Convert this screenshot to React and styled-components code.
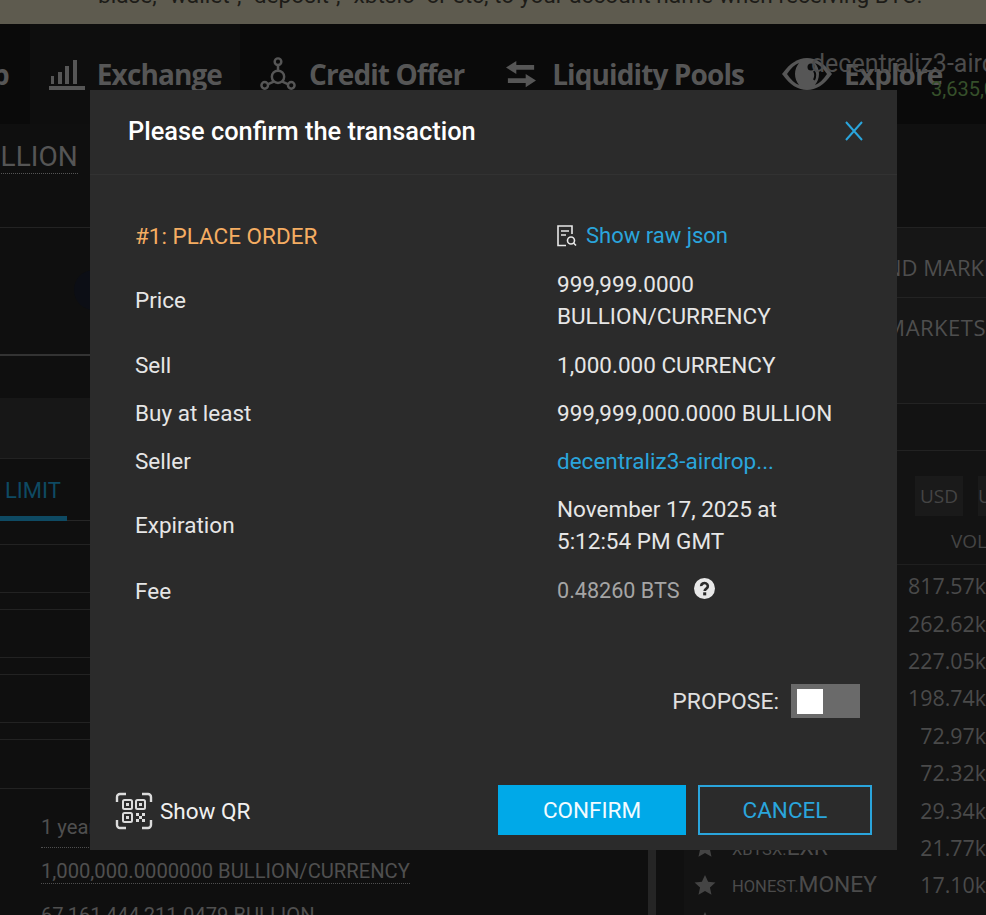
import React from 'react';
import styled, { createGlobalStyle } from 'styled-components';

const GlobalStyle = createGlobalStyle`
  html, body {
    margin: 0;
    padding: 0;
    background: #0e0e0e;
    overflow: hidden;
  }
  body {
    font-family: Roboto, "Liberation Sans", sans-serif;
  }
`;

const Page = styled.div`
  position: relative;
  width: 986px;
  height: 915px;
  overflow: hidden;
  background: #0e0e0e;
  display: flex;
  flex-direction: column;
`;

const Banner = styled.div`
  height: 24px;
  flex: none;
  background: #5e5b4f;
  display: flex;
  align-items: flex-end;
  padding: 0 0 16px 98px;
  box-sizing: border-box;
  font-size: 22.7px;
  line-height: 24px;
  color: #1d1c18;
  white-space: nowrap;
  overflow: hidden;
`;

const Nav = styled.div`
  height: 100px;
  flex: none;
  background: #0a0a0a;
  display: flex;
  align-items: center;
  position: relative;
  overflow: hidden;
`;

const NavItem = styled.div`
  display: flex;
  align-items: center;
  flex: none;
  gap: ${p => p.$gap || 13}px;
  margin-left: ${p => p.$left}px;
  padding: ${p => (p.$active ? '0 18px 0 19px' : '0')};
  background: ${p => (p.$active ? '#0e0e0e' : 'transparent')};
  font-family: "Open Sans", sans-serif;
  font-weight: 700;
  font-size: 28px;
  letter-spacing: -0.9px;
  color: #565656;
  white-space: nowrap;
  height: 100px;
`;

const Account = styled.div`
  position: absolute;
  left: 811px;
  top: 26px;
  font-size: 25px;
  line-height: 28px;
  color: #4c4c4c;
  white-space: nowrap;
`;

const Balance = styled.div`
  position: absolute;
  left: 931px;
  top: 53px;
  font-size: 20px;
  line-height: 24px;
  color: #36502a;
  white-space: nowrap;
`;

const Columns = styled.div`
  flex: 1;
  display: grid;
  grid-template-columns: 648px 8px 28px 1fr;
  min-height: 0;
`;

const LeftColumn = styled.div`
  background: #0f0f0f;
  overflow: hidden;
`;

const Splitter = styled.div`
  background: #252525;
`;

const Gutter = styled.div`
  background: #101010;
`;

const TitleRow = styled.div`
  height: 104px;
  box-sizing: border-box;
  border-bottom: 1px solid #232323;
  padding-top: 17px;
`;

const PairTitle = styled.span`
  display: block;
  width: fit-content;
  font-size: 28px;
  line-height: 32px;
  color: #555;
  margin-left: -35px;
  border-bottom: 1px dotted #555;
`;

const Stripe = styled.div`
  display: flow-root;
  height: ${p => p.$h}px;
  box-sizing: border-box;
  background: ${p => p.$bg || 'transparent'};
  border-bottom: ${p => (p.$line === undefined ? 1 : p.$line)}px solid ${p => p.$color || '#222'};
`;

const PairLogo = styled.div`
  width: 40px;
  height: 40px;
  margin: 42px 0 0 74px;
  border-radius: 50%;
  background: #0c0e15;
`;

const TabRow = styled.div`
  height: 62px;
  box-sizing: border-box;
  border-bottom: 1px solid #262626;
  display: flex;
  align-items: flex-end;
`;

const LimitTab = styled.div`
  width: 67px;
  box-sizing: border-box;
  padding: 0 0 13px 5px;
  border-bottom: 5px solid #0e4a63;
  margin-bottom: -1px;
  font-size: 22px;
  line-height: 24px;
  color: #0e4a63;
`;

const Summary = styled.div`
  padding: 26px 0 0 41px;
`;

const SummaryLine = styled.div`
  margin-bottom: ${p => p.$after}px;
  span {
    display: block;
    width: fit-content;
    padding-bottom: ${p => p.$under || 0}px;
    font-size: 20.2px;
    line-height: 24px;
    color: #4f4f4f;
    border-bottom: 1px dotted #4f4f4f;
    white-space: nowrap;
  }
`;

const RightColumn = styled.div`
  background: #131313;
  overflow: hidden;
`;

const MarketHead = styled.div`
  height: ${p => p.$h}px;
  box-sizing: border-box;
  background: #161616;
  border-bottom: 1px solid #232323;
  display: flex;
  align-items: center;
  justify-content: ${p => (p.$end ? 'flex-end' : 'flex-start')};
  padding: ${p => p.$top || 0}px 0 ${p => p.$bottom || 0}px ${p => p.$pad || 0}px;
  font-family: "Open Sans", sans-serif;
  font-size: 22px;
  letter-spacing: ${p => (p.$end ? 0.5 : 0)}px;
  color: #4e4e4e;
  white-space: nowrap;
`;

const CurrencyTabs = styled.div`
  height: 65px;
  box-sizing: border-box;
  display: flex;
  align-items: flex-end;
  gap: 15px;
  padding-left: 231px;
`;

const CurrencyTab = styled.div`
  flex: none;
  width: 48px;
  height: 40px;
  background: #1a1a1a;
  font-family: "Open Sans", sans-serif;
  font-size: 19px;
  line-height: 40px;
  text-align: center;
  color: #444;
`;

const VolHead = styled.div`
  height: 49px;
  box-sizing: border-box;
  border-bottom: 1px solid #1f1f1f;
  padding-left: 267px;
  margin-bottom: 2px;
  font-family: "Open Sans", sans-serif;
  font-size: 19px;
  line-height: 50px;
  color: #444;
  white-space: nowrap;
  overflow: hidden;
`;

const MarketRow = styled.div`
  height: 37.4px;
  display: flex;
  align-items: center;
  justify-content: space-between;
  padding-left: 10px;
`;

const MarketName = styled.div`
  display: flex;
  align-items: baseline;
  color: #4b4b4b;
  font-size: 22.8px;
  svg {
    align-self: center;
    margin-right: 16px;
  }
  small {
    font-size: 16.5px;
  }
`;

const MarketVol = styled.div`
  font-family: "Open Sans", sans-serif;
  font-size: 21.4px;
  color: #4a4a4a;
`;

const Modal = styled.div`
  position: absolute;
  left: 90px;
  top: 90px;
  width: 807px;
  height: 760px;
  background: #2b2b2b;
  display: flex;
  flex-direction: column;
  color: #e6e6e6;
`;

const ModalHeader = styled.div`
  height: 85px;
  flex: none;
  box-sizing: border-box;
  border-bottom: 1px solid #323232;
  display: flex;
  align-items: center;
  justify-content: space-between;
  padding: 0 33px 2px 38px;
  font-size: 25.4px;
  font-weight: 500;
  color: #fff;
`;

const CloseIcon = styled.svg`
  width: 20px;
  height: 20px;
  stroke: #2aa5dc;
  stroke-width: 2;
  fill: none;
`;

const ModalBody = styled.div`
  flex: 1;
  display: flex;
  flex-direction: column;
  gap: 16px;
  padding: 45px 0 0 45px;
`;

const InfoRow = styled.div`
  display: grid;
  grid-template-columns: 422px 1fr;
  align-items: center;
  margin-top: ${p => p.$top || 0}px;
  font-size: 22.5px;
  line-height: 32px;
`;

const OrderLabel = styled.div`
  color: #f5ad62;
`;

const JsonLink = styled.div`
  display: flex;
  align-items: center;
  gap: 9px;
  font-size: 22px;
  line-height: 34px;
  height: 32px;
  color: #2aa5dc;
`;

const LinkValue = styled.div`
  color: #2aa5dc;
`;

const FeeValue = styled.div`
  display: flex;
  align-items: center;
  gap: 14px;
  font-size: 21.6px;
  color: #a5a5a5;
  svg {
    margin-top: -6px;
  }
`;

const ProposeRow = styled.div`
  display: flex;
  justify-content: flex-end;
  align-items: center;
  gap: 12px;
  margin-top: 61px;
  padding-right: 37px;
  font-size: 22.9px;
  color: #e0e0e0;
`;

const Toggle = styled.div`
  width: 69px;
  height: 34px;
  box-sizing: border-box;
  background: #6a6a6a;
  padding: 5px 6px;
`;

const ToggleKnob = styled.div`
  width: 26px;
  height: 25px;
  background: #fff;
`;

const ModalFooter = styled.div`
  height: 65px;
  flex: none;
  display: flex;
  align-items: flex-start;
  justify-content: space-between;
  padding: 0 25px;
`;

const QrButton = styled.div`
  display: flex;
  align-items: center;
  gap: 7px;
  font-size: 22.5px;
  color: #f0f0f0;
  margin-top: 7px;
`;

const Buttons = styled.div`
  display: flex;
  gap: 12px;
`;

const ActionButton = styled.div`
  height: 50px;
  width: ${p => p.$w}px;
  box-sizing: border-box;
  display: flex;
  align-items: center;
  justify-content: center;
  font-size: 22.5px;
  background: ${p => (p.$primary ? '#00a9e8' : 'transparent')};
  color: ${p => (p.$primary ? '#f2fbff' : '#2aa5dc')};
  border: 2px solid ${p => (p.$primary ? '#00a9e8' : '#2aa5dc')};
`;

const ExchangeIcon = () => (
  <svg width="36" height="32" viewBox="0 0 36 32" fill="#565656">
    <rect x="2" y="18" width="3" height="8" />
    <rect x="9" y="14" width="4" height="12" />
    <rect x="16" y="8" width="4" height="18" />
    <rect x="24" y="2" width="4" height="24" />
    <rect x="0" y="28" width="36" height="4" />
  </svg>
);

const CreditIcon = () => (
  <svg width="36" height="36" viewBox="0 0 38 36" fill="none" stroke="#565656" strokeWidth="2.6">
    <circle cx="19" cy="5" r="3.5" />
    <circle cx="5" cy="30" r="3.5" />
    <circle cx="33" cy="30" r="3.5" />
    <circle cx="19" cy="21" r="6.5" />
    <path d="M19 8.5V15M14.5 26L8 29M23.5 26L30 29" />
  </svg>
);

const PoolsIcon = () => (
  <svg width="30" height="28" viewBox="0 0 32 28" fill="#565656">
    <path d="M11 0L0 7l11 7V9.5h19v-5H11z" />
    <path d="M21 14l11 7-11 7v-4.500H2v-5h19z" />
  </svg>
);

const EyeIcon = () => (
  <svg width="50" height="32" viewBox="0 0 50 32">
    <path d="M0 16C8 5 16 0 25 0s17 5 25 16c-8 11-16 16-25 16S8 27 0 16z" fill="#565656" />
    <path d="M5 16C9 10 13 6.500 17 5c-2.500 3-4 6.800-4 11s1.500 8 4 11c-4-1.500-8-5-12-11z" fill="#0a0a0a" />
    <path d="M45 16c-4-6-8-9.500-12-11 2.500 3 4 6.800 4 11s-1.500 8-4 11c4-1.500 8-5 12-11z" fill="#0a0a0a" />
    <circle cx="29" cy="9" r="3.500" fill="#0a0a0a" />
    <path d="M32 13c1.500 2.500 1.500 6 0 9" fill="none" stroke="#0a0a0a" strokeWidth="2" />
  </svg>
);

const RawJsonIcon = () => (
  <svg width="20" height="22" viewBox="0 0 20 22" fill="none" stroke="#e8e8e8" strokeWidth="1.6">
    <path d="M9 20.500H1V1h14v8" />
    <path d="M4 6h8M4 10h5" />
    <circle cx="14" cy="15.500" r="3.500" />
    <path d="M16.500 18l2.500 2.500" />
  </svg>
);

const HelpIcon = () => (
  <svg width="21" height="21" viewBox="0 0 22 22">
    <circle cx="11" cy="11" r="11" fill="#e8e8e8" />
    <path d="M7.500 8.500a3.500 3.200 0 1 1 5.500 2.600c-1.200.9-1.800 1.300-1.800 2.600" fill="none" stroke="#2b2b2b" strokeWidth="2.800" />
    <rect x="9.600" y="15" width="3.200" height="3.200" fill="#2b2b2b" />
  </svg>
);

const QrIcon = () => (
  <svg width="38" height="38" viewBox="0 0 38 38" fill="none" stroke="#dcdcdc">
    <g strokeWidth="2.400">
      <path d="M2 10V5a3 3 0 0 1 3-3h6M27 2h6a3 3 0 0 1 3 3v5M36 28v5a3 3 0 0 1-3 3h-6M11 36H5a3 3 0 0 1-3-3v-5" />
    </g>
    <g strokeWidth="2">
      <rect x="8" y="8" width="9" height="9" rx="1.500" />
      <rect x="21" y="8" width="9" height="9" rx="1.500" />
      <rect x="8" y="21" width="9" height="9" rx="1.500" />
    </g>
    <g fill="#dcdcdc" stroke="none">
      <rect x="11" y="11" width="3" height="3" />
      <rect x="24" y="11" width="3" height="3" />
      <rect x="11" y="24" width="3" height="3" />
      <rect x="21" y="21" width="3" height="3" />
      <rect x="27" y="21" width="3" height="3" />
      <rect x="24" y="24" width="3" height="3" />
      <rect x="21" y="27" width="3" height="3" />
      <rect x="27" y="27" width="3" height="3" />
    </g>
  </svg>
);

const StarIcon = () => (
  <svg width="22" height="22" viewBox="0 0 24 24" fill="#444">
    <path d="M12 1l3.400 7.400 8 .9-6 5.400 1.700 7.900L12 18.600l-7.100 4 1.700-7.900-6-5.400 8-.9z" />
  </svg>
);

const volumes = ['817.57k', '262.62k', '227.05k', '198.74k', '72.97k', '72.32k', '29.34k'];

const App = () => (
  <>
    <GlobalStyle />
    <Page>
      <Banner>blase, "wallet", "deposit", "xbtsio" or etc, to your account name when receiving BTC.</Banner>
      <Nav>
        <NavItem $left={-8}>p</NavItem>
        <NavItem $left={21} $active $gap={12}><ExchangeIcon />Exchange</NavItem>
        <NavItem $left={20}><CreditIcon />Credit Offer</NavItem>
        <NavItem $left={42} $gap={16}><PoolsIcon />Liquidity Pools</NavItem>
        <NavItem $left={38} $gap={12}><EyeIcon />Explore</NavItem>
        <Account>decentraliz3-airdrop</Account>
        <Balance>3,635,000</Balance>
      </Nav>
      <Columns>
        <LeftColumn>
          <TitleRow><PairTitle>BULLION</PairTitle></TitleRow>
          <Stripe $h={128} $line={2} $color="#333"><PairLogo /></Stripe>
          <Stripe $h={42} $line={0} />
          <Stripe $h={61} $bg="#171717" />
          <TabRow><LimitTab>LIMIT</LimitTab></TabRow>
          <Stripe $h={24} />
          <Stripe $h={48} />
          <Stripe $h={17} />
          <Stripe $h={48} />
          <Stripe $h={17} />
          <Stripe $h={48} />
          <Stripe $h={17} />
          <Stripe $h={49} />
          <Summary>
            <SummaryLine $under={8} $after={11}><span>1 year</span></SummaryLine>
            <SummaryLine $after={19}><span>1,000,000.0000000 BULLION/CURRENCY</span></SummaryLine>
            <SummaryLine $after={0}><span>67,161,444,211.0479 BULLION</span></SummaryLine>
          </Summary>
        </LeftColumn>
        <Splitter />
        <Gutter />
        <RightColumn>
          <Stripe $h={104} $bg="#101010" />
          <MarketHead $h={70} $top={8} $pad={201}>ND MARKETS</MarketHead>
          <MarketHead $h={106} $bottom={48} $end>MARKETS</MarketHead>
          <Stripe $h={47} />
          <CurrencyTabs>
            <CurrencyTab>USD</CurrencyTab>
            <CurrencyTab>USDT</CurrencyTab>
          </CurrencyTabs>
          <VolHead>VOLUME</VolHead>
          {volumes.map(v => (
            <MarketRow key={v}>
              <MarketName><StarIcon /></MarketName>
              <MarketVol>{v}</MarketVol>
            </MarketRow>
          ))}
          <MarketRow>
            <MarketName><StarIcon /><small>XBTSX.</small>EXR</MarketName>
            <MarketVol>21.77k</MarketVol>
          </MarketRow>
          <MarketRow>
            <MarketName><StarIcon /><small>HONEST.</small>MONEY</MarketName>
            <MarketVol>17.10k</MarketVol>
          </MarketRow>
          <MarketRow>
            <MarketName><StarIcon /></MarketName>
          </MarketRow>
        </RightColumn>
      </Columns>
      <Modal>
        <ModalHeader>
          Please confirm the transaction
          <CloseIcon viewBox="0 0 20 20"><path d="M2 1l16 18M18 1L2 19" /></CloseIcon>
        </ModalHeader>
        <ModalBody>
          <InfoRow>
            <OrderLabel>#1: PLACE ORDER</OrderLabel>
            <JsonLink><RawJsonIcon />Show raw json</JsonLink>
          </InfoRow>
          <InfoRow>
            <div>Price</div>
            <div>999,999.0000<br />BULLION/CURRENCY</div>
          </InfoRow>
          <InfoRow $top={1}>
            <div>Sell</div>
            <div>1,000.000 CURRENCY</div>
          </InfoRow>
          <InfoRow>
            <div>Buy at least</div>
            <div>999,999,000.0000 BULLION</div>
          </InfoRow>
          <InfoRow>
            <div>Seller</div>
            <LinkValue>decentraliz3-airdrop...</LinkValue>
          </InfoRow>
          <InfoRow>
            <div>Expiration</div>
            <div>November 17, 2025 at<br />5:12:54 PM GMT</div>
          </InfoRow>
          <InfoRow $top={2}>
            <div>Fee</div>
            <FeeValue>0.48260 BTS<HelpIcon /></FeeValue>
          </InfoRow>
          <ProposeRow>
            PROPOSE:
            <Toggle><ToggleKnob /></Toggle>
          </ProposeRow>
        </ModalBody>
        <ModalFooter>
          <QrButton><QrIcon />Show QR</QrButton>
          <Buttons>
            <ActionButton $primary $w={188}>CONFIRM</ActionButton>
            <ActionButton $w={174}>CANCEL</ActionButton>
          </Buttons>
        </ModalFooter>
      </Modal>
    </Page>
  </>
);

export default App;
